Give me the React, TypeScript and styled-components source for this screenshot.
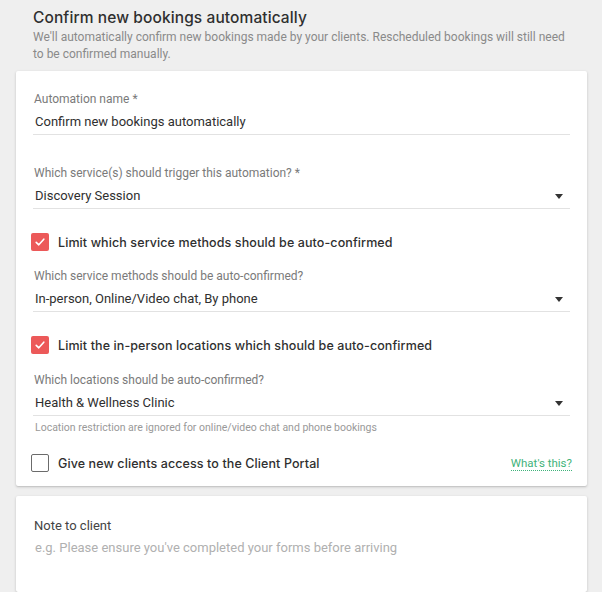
import React from "react";
import styled, { createGlobalStyle } from "styled-components";

const Global = createGlobalStyle`
  html, body { margin: 0; padding: 0; background: #efefef; }
  body { font-family: Roboto, "Liberation Sans", sans-serif; color: #333; }
  * { box-sizing: border-box; }
`;

const Page = styled.div`
  width: 602px;
  height: 592px;
  overflow: hidden;
  padding: 7px 15px 0 16px;
  display: flex;
  flex-direction: column;
`;

const Intro = styled.div`
  padding: 0 20px 0 17px;
  margin-bottom: 8px;
`;

const Title = styled.h1`
  margin: 0;
  font-family: Inter, Lato, sans-serif;
  font-weight: 450;
  font-size: 15.5px;
  letter-spacing: 0.1px;
  line-height: 22px;
  color: #2f2f2f;
`;

const Description = styled.p`
  margin: 0;
  font-family: Roboto, sans-serif;
  font-size: 12px;
  line-height: 17px;
  color: #8a8a8a;
`;

const Card = styled.section<{ $height?: number; $top?: number }>`
  background: #fff;
  border-radius: 2px;
  box-shadow: 0 1px 3px rgba(0, 0, 0, 0.18), 0 1px 1px rgba(0, 0, 0, 0.06);
  padding: ${(p) => p.$top ?? 20}px 17px 14px 17px;
  display: flex;
  flex-direction: column;
  ${(p) => (p.$height ? `height: ${p.$height}px; flex-shrink: 0;` : "")}
`;

const Gap = styled.div<{ $h: number }>`
  height: ${(p) => p.$h}px;
  flex-shrink: 0;
`;

const Field = styled.div`
  display: flex;
  flex-direction: column;
`;

const Label = styled.label<{ $dark?: boolean }>`
  font-size: ${(p) => (p.$dark ? "13px" : "12px")};
  line-height: 16px;
  color: ${(p) => (p.$dark ? "#444" : "#7a7a7a")};
  padding-left: 1px;
`;

const ValueRow = styled.div<{ $plain?: boolean }>`
  margin-top: ${(p) => (p.$plain ? "4px" : "5px")};
  display: flex;
  align-items: center;
  justify-content: space-between;
  font-size: 13px;
  line-height: 20px;
  padding: 0 7px 2px 2px;
  border-bottom: ${(p) => (p.$plain ? "none" : "1px solid #e2e2e2")};
  color: #2f2f2f;
`;

const Placeholder = styled.span`
  color: #b0b0b0;
`;

const Caret = styled.span`
  width: 0;
  height: 0;
  border-left: 4.5px solid transparent;
  border-right: 4.5px solid transparent;
  border-top: 5px solid #333;
`;

const Helper = styled.div`
  margin-top: 5px;
  font-size: 10.5px;
  line-height: 14px;
  color: #999;
  padding-left: 2px;
`;

const CheckRow = styled.div`
  display: flex;
  align-items: center;
  height: 18px;
  margin-left: -2px;
`;

const Box = styled.span<{ $checked: boolean }>`
  width: 18px;
  height: 18px;
  border-radius: 2px;
  flex-shrink: 0;
  display: flex;
  align-items: center;
  justify-content: center;
  background: ${(p) => (p.$checked ? "#ec5959" : "#fff")};
  border: ${(p) => (p.$checked ? "none" : "1.5px solid #6b6b6b")};
`;

const CheckLabel = styled.span`
  margin-left: 9px;
  font-family: Inter, Lato, sans-serif;
  font-weight: 500;
  font-size: 12.5px;
  letter-spacing: 0.1px;
  color: #2f2f2f;
  flex: 1;
`;

const HelpLink = styled.a`
  font-size: 11.5px;
  color: #3fb37a;
  text-decoration: none;
  border-bottom: 1px dotted #3fb37a;
  line-height: 14px;
  margin-right: -2px;
`;

function Checkbox({ checked, label, extra }: { checked: boolean; label: string; extra?: React.ReactNode }) {
  return (
    <CheckRow>
      <Box $checked={checked}>
        {checked && (
          <svg width="12" height="12" viewBox="0 0 12 12" fill="none">
            <path d="M2.2 6.3 L4.8 8.8 L9.8 3.2" stroke="#fff" strokeWidth="1.6" strokeLinecap="round" strokeLinejoin="round" />
          </svg>
        )}
      </Box>
      <CheckLabel>{label}</CheckLabel>
      {extra}
    </CheckRow>
  );
}

function Select({ label, value }: { label: string; value: string }) {
  return (
    <Field>
      <Label>{label}</Label>
      <ValueRow>
        <span>{value}</span>
        <Caret />
      </ValueRow>
    </Field>
  );
}

export default function App() {
  return (
    <>
      <Global />
      <Page>
        <Intro>
          <Title>Confirm new bookings automatically</Title>
          <Description>
            We'll automatically confirm new bookings made by your clients. Rescheduled bookings will still need to be
            confirmed manually.
          </Description>
        </Intro>
        <Card>
          <Field>
            <Label>Automation name *</Label>
            <ValueRow>
              <span>Confirm new bookings automatically</span>
            </ValueRow>
          </Field>
          <Gap $h={30} />
          <Select label="Which service(s) should trigger this automation? *" value="Discovery Session" />
          <Gap $h={24} />
          <Checkbox checked label="Limit which service methods should be auto-confirmed" />
          <Gap $h={17} />
          <Select label="Which service methods should be auto-confirmed?" value="In-person, Online/Video chat, By phone" />
          <Gap $h={24} />
          <Checkbox checked label="Limit the in-person locations which should be auto-confirmed" />
          <Gap $h={18} />
          <Select label="Which locations should be auto-confirmed?" value="Health & Wellness Clinic" />
          <Helper>Location restriction are ignored for online/video chat and phone bookings</Helper>
          <Gap $h={19} />
          <Checkbox
            checked={false}
            label="Give new clients access to the Client Portal"
            extra={<HelpLink href="#">What's this?</HelpLink>}
          />
        </Card>
        <Gap $h={10} />
        <Card $height={96} $top={22}>
          <Field>
            <Label $dark>Note to client</Label>
            <ValueRow $plain>
              <Placeholder>e.g. Please ensure you've completed your forms before arriving</Placeholder>
            </ValueRow>
          </Field>
        </Card>
      </Page>
    </>
  );
}
